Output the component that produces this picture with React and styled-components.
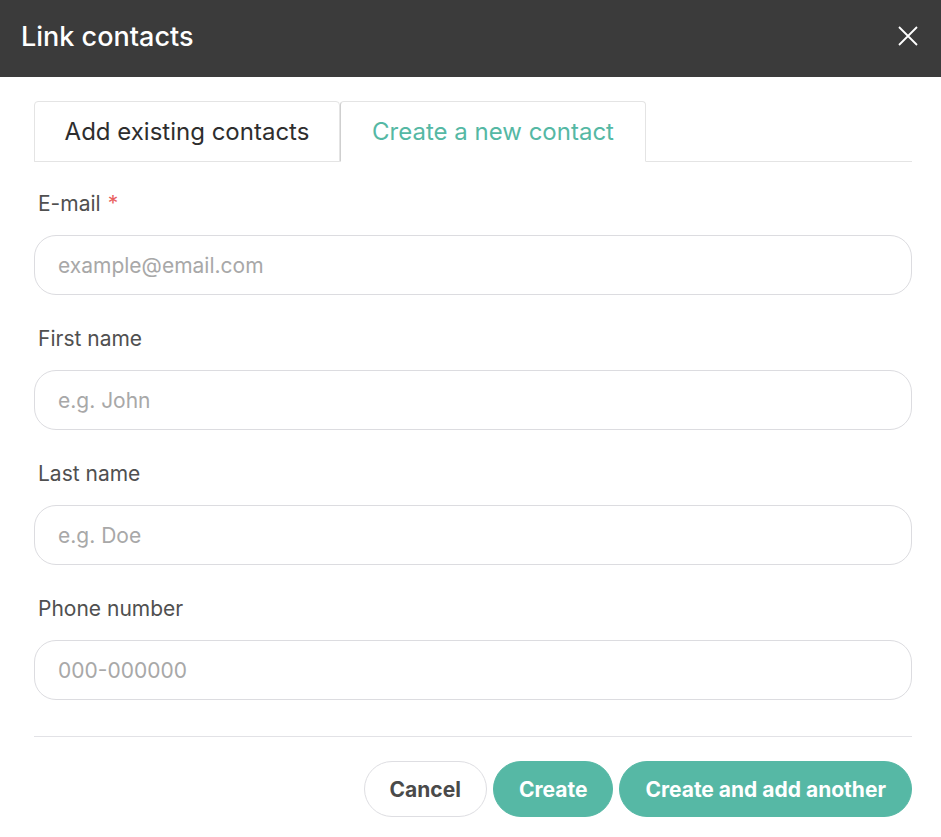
import React from "react";
import styled, { createGlobalStyle } from "styled-components";

const GlobalStyle = createGlobalStyle`
  body {
    margin: 0;
    background: #fff;
    font-family: Inter, "Noto Sans", sans-serif;
  }
`;

const Header = styled.div`
  height: 77px;
  background: #3b3b3b;
  display: flex;
  align-items: center;
  justify-content: space-between;
  padding: 0 21px 5px 21px;
  box-sizing: border-box;
`;

const Title = styled.h1`
  margin: 0;
  font-size: 27px;
  font-weight: 500;
  color: #fff;
`;

const CloseButton = styled.button`
  background: none;
  border: 0;
  padding: 0;
  margin-right: 1px;
  width: 22px;
  height: 22px;
  display: flex;
  align-items: center;
  justify-content: center;
  cursor: pointer;
`;

const Body = styled.div`
  padding: 24px 29px 0 34px;
`;

const TabBar = styled.div`
  display: flex;
  border-bottom: 1px solid #e4e4e4;
`;

const Tab = styled.button`
  width: 306px;
  height: 61px;
  margin-bottom: -1px;
  padding: 0;
  background: #fff;
  font-family: inherit;
  font-size: 24px;
  color: ${(p) => (p.$active ? "#55b8a4" : "#2e2e2e")};
  border: 1px solid #e4e4e4;
  border-left-color: ${(p) => (p.$active ? "#cfcfcf" : "#e4e4e4")};
  border-bottom-color: ${(p) => (p.$active ? "#fff" : "#e4e4e4")};
  border-radius: 4px 4px 0 0;
  cursor: pointer;
`;

const Form = styled.div`
  display: flex;
  flex-direction: column;
  padding-top: 30px;
`;

const Field = styled.div`
  display: flex;
  flex-direction: column;
  margin-bottom: 32px;
  &:last-child {
    margin-bottom: 0;
  }
`;

const Label = styled.label`
  font-size: 21px;
  line-height: 24px;
  color: #505050;
  padding-left: 4px;
  margin-bottom: 19px;
`;

const Required = styled.span`
  color: #e8605e;
  margin-left: 7px;
`;

const Input = styled.input`
  height: 60px;
  box-sizing: border-box;
  border: 1px solid #dcdce0;
  border-radius: 22px;
  padding: 0 23px;
  font-family: inherit;
  font-size: 21px;
  color: #333;
  outline: none;
  &::placeholder {
    color: #a8a8a8;
  }
`;

const Divider = styled.hr`
  border: 0;
  border-top: 1px solid #e2e2e6;
  margin: 36px 0 24px;
`;

const Actions = styled.div`
  display: flex;
  justify-content: flex-end;
  gap: 6px;
`;

const Button = styled.button`
  height: 56px;
  padding: 0 25px;
  border-radius: 28px;
  font-family: inherit;
  font-size: 21px;
  font-weight: 700;
  cursor: pointer;
  border: 1px solid ${(p) => (p.$primary ? "#56b8a5" : "#dedee2")};
  background: ${(p) => (p.$primary ? "#56b8a5" : "#fff")};
  color: ${(p) => (p.$primary ? "#fff" : "#4a4a4a")};
`;

const fields = [
  { label: "E-mail", placeholder: "example@email.com", required: true },
  { label: "First name", placeholder: "e.g. John" },
  { label: "Last name", placeholder: "e.g. Doe" },
  { label: "Phone number", placeholder: "000-000000" },
];

export default function App() {
  return (
    <>
      <GlobalStyle />
      <Header>
        <Title>Link contacts</Title>
        <CloseButton aria-label="Close">
          <svg width="20" height="20" viewBox="0 0 20 20">
            <path d="M1 1 L19 19 M19 1 L1 19" stroke="#fff" strokeWidth="1.8" />
          </svg>
        </CloseButton>
      </Header>
      <Body>
        <TabBar>
          <Tab>Add existing contacts</Tab>
          <Tab $active>Create a new contact</Tab>
        </TabBar>
        <Form>
          {fields.map((f) => (
            <Field key={f.label}>
              <Label>
                {f.label}
                {f.required && <Required>*</Required>}
              </Label>
              <Input placeholder={f.placeholder} />
            </Field>
          ))}
        </Form>
        <Divider />
        <Actions>
          <Button>Cancel</Button>
          <Button $primary>Create</Button>
          <Button $primary>Create and add another</Button>
        </Actions>
      </Body>
    </>
  );
}
